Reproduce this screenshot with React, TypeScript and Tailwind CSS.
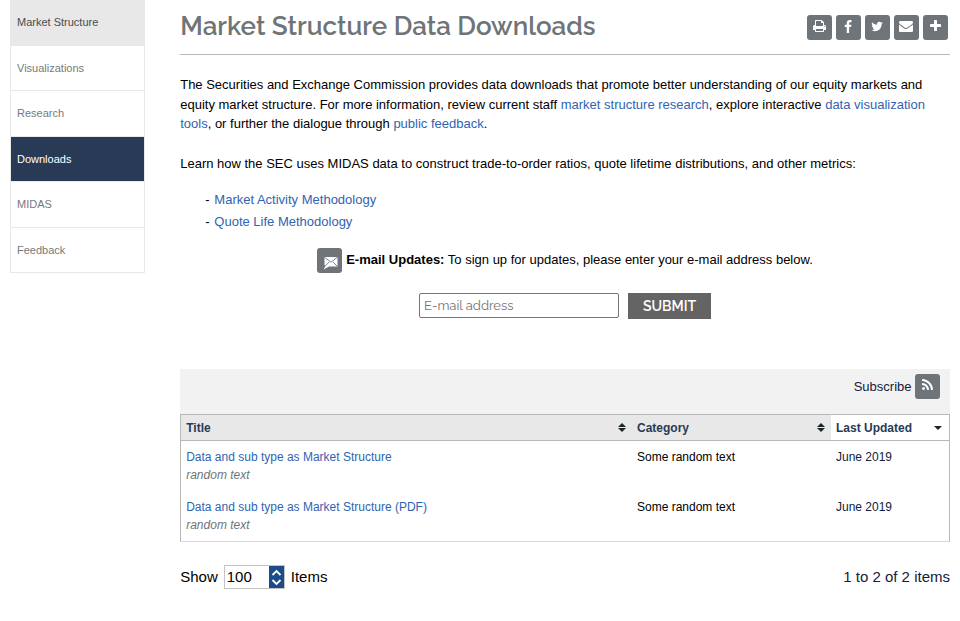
import React from "react";

const heading = "font-['Raleway','Lato',sans-serif]";

const navItems = [
  { label: "Market Structure", cls: "h-[46px] bg-[#e8e8e8] text-[#4a4c4f]" },
  { label: "Visualizations", cls: "h-[45px] border-b pt-[2px] text-[#77797c]" },
  { label: "Research", cls: "h-[46px] border-b text-[#77797c]" },
  { label: "Downloads", cls: "h-[45px] border-b bg-[#283a56] pt-[2px] text-white" },
  { label: "MIDAS", cls: "h-[46px] border-b text-[#77797c]" },
  { label: "Feedback", cls: "h-[45px] border-b pt-[2px] text-[#77797c]" },
];

const rows = [
  { title: "Data and sub type as Market Structure", category: "Some random text", date: "June 2019" },
  { title: "Data and sub type as Market Structure (PDF)", category: "Some random text", date: "June 2019" },
];

const icons = {
  print: {
    w: 1664,
    d: "M384 1536h896v-256h-896v256zM384 896h896v-384h-160q-40 0-68-28t-28-68v-160h-640v640zM1536 960q0-26-19-45t-45-19-45 19-19 45 19 45 45 19 45-19 19-45zM1664 960v416q0 13-9.5 22.5t-22.5 9.5h-224v160q0 40-28 68t-68 28h-960q-40 0-68-28t-28-68v-160h-224q-13 0-22.5-9.5t-9.5-22.5v-416q0-79 56.5-135.5t135.5-56.5h64v-544q0-40 28-68t68-28h672q40 0 88 20t76 48l152 152q28 28 48 76t20 88v256h64q79 0 135.5 56.5t56.5 135.5z",
  },
  facebook: {
    w: 1024,
    d: "M959 140v264h-157q-86 0-116 36t-30 108v189h293l-39 296h-254v759h-306v-759h-255v-296h255v-218q0-186 104-288.5t277-102.5q147 0 228 12z",
  },
  twitter: {
    w: 1664,
    d: "M1620 408q-67 98-162 167 1 14 1 42 0 130-38 259.5t-115.5 248.5-184.5 210.5-258 146-323 54.5q-271 0-496-145 35 4 78 4 225 0 401-138-105-2-188-64.5t-114-159.5q33 5 61 5 43 0 85-11-112-23-185.5-111.5t-73.5-205.5v-4q68 38 146 41-66-44-105-115t-39-154q0-88 44-163 121 149 294.5 238.5t371.5 99.5q-8-38-8-74 0-134 94.5-228.5t228.5-94.5q140 0 236 102 109-21 205-78-37 115-142 178 93-10 186-50z",
  },
  envelope: {
    w: 1792,
    d: "M1792 710v794q0 66-47 113t-113 47h-1472q-66 0-113-47t-47-113v-794q44 49 101 87 362 246 497 345 57 42 92.5 65.5t94.5 48 110 24.5h2q51 0 110-24.5t94.5-48 92.5-65.5q170-123 498-345 57-39 100-87zM1792 416q0 79-49 151t-122 123q-376 261-468 325-10 7-42.5 31t-54 38.5-52 32.5-57.5 27-50 9h-2q-23 0-50-9t-57.5-27-52-32.5-54-38.5-42.5-31q-91-64-262-182.5t-205-142.5q-62-42-117-115.5t-55-136.5q0-78 41.5-130t118.5-52h1472q65 0 112.5 47t47.5 113z",
  },
  plus: {
    w: 1408,
    d: "M1408 736v192q0 40-28 68t-68 28h-416v416q0 40-28 68t-68 28h-192q-40 0-68-28t-28-68v-416h-416q-40 0-68-28t-28-68v-192q0-40 28-68t68-28h416v-416q0-40 28-68t68-28h192q40 0 68 28t28 68v416h416q40 0 68 28t28 68z",
  },
  rss: {
    w: 1408,
    d: "M384 1344q0 80-56 136t-136 56-136-56-56-136 56-136 136-56 136 56 56 136zM896 1467q2 28-17 48-18 21-47 21h-135q-25 0-43-16.5t-20-41.5q-22-229-184.5-391.5t-391.5-184.5q-25-2-41.5-20t-16.5-43v-135q0-29 21-47 17-17 43-17h5q160 13 306 80.5t259 181.5q114 113 181.5 259t80.5 306zM1408 1469q2 27-18 47-18 20-46 20h-143q-26 0-44.5-17.5t-19.5-42.5q-12-215-101-408.5t-231.5-336-336-231.5-408.5-102q-25-1-42.5-19.5t-17.5-43.5v-143q0-28 20-46 18-18 44-18h3q262 13 501.5 120t425.5 294q187 186 294 425.5t120 501.5z",
  },
};

function Tile({ children }: { children: React.ReactNode }) {
  return (
    <span className="flex h-[25px] w-[25px] shrink-0 items-center justify-center rounded-[3px] bg-[#6f7478] text-white">
      {children}
    </span>
  );
}

function IconTile({ name, size = 14 }: { name: keyof typeof icons; size?: number }) {
  const { w, d } = icons[name];
  return (
    <Tile>
      <svg className="mb-[3px]" width={(w / 1792) * size} height={size} viewBox={`0 0 ${w} 1792`} fill="currentColor">
        <path d={d} />
      </svg>
    </Tile>
  );
}

function SortIcon() {
  return (
    <svg width="8" height="9" viewBox="0 0 8 9" fill="#1c2529">
      <path d="M4 0 8 4H0zM0 5h8L4 9z" />
    </svg>
  );
}

function Link({ children }: { children: React.ReactNode }) {
  return <a className="text-[#3164b0]">{children}</a>;
}

export default function App() {
  return (
    <div className="flex h-[621px] w-[960px] overflow-hidden bg-white pl-[10px] font-['Liberation_Sans',Arial,sans-serif] text-[13px] leading-[19.5px] text-black">
      <nav className="w-[135px] shrink-0 text-[11px]">
        {navItems.map((n) => (
          <div key={n.label} className={`flex items-center border-x border-[#e8e8e8] px-[6px] ${n.cls}`}>
            {n.label}
          </div>
        ))}
      </nav>

      <main className="ml-[35.2px] w-[769.8px]">
        <header className="flex h-[55px] justify-between border-b border-[#b8b8b8]">
          <h1 className={`${heading} mt-[10px] whitespace-nowrap text-[26px] font-semibold leading-[32px] tracking-[-0.01px] text-[#6f7478]`}>
            Market Structure Data Downloads
          </h1>
          <div className="mr-[2px] mt-[15px] flex gap-[4px]">
            <IconTile name="print" />
            <IconTile name="facebook" />
            <IconTile name="twitter" size={13} />
            <IconTile name="envelope" />
            <IconTile name="plus" />
          </div>
        </header>

        <p className="mt-[20px]">
          The Securities and Exchange Commission provides data downloads that promote better understanding of our equity markets and
          equity market structure. For more information, review current staff <Link>market structure research</Link>, explore
          interactive <Link>data visualization tools</Link>, or further the dialogue through <Link>public feedback</Link>.
        </p>
        <p className="mt-[20px]">
          Learn how the SEC uses MIDAS data to construct trade-to-order ratios, quote lifetime distributions, and other metrics:
        </p>
        <ul className="mt-[16px] pl-[25px] leading-[22px]">
          {["Market Activity Methodology", "Quote Life Methodology"].map((t) => (
            <li key={t} className="flex gap-[4.8px]"><span>-</span><Link>{t}</Link></li>
          ))}
        </ul>

        <div className="mt-[15px] flex h-[25px] justify-center gap-[3.8px]">
          <Tile>
            <svg width="15" height="14" viewBox="0 0 15 14" className="ml-[2px] mt-[5px]">
              <path d="M1.500 1h13v9.500H6L.5 13.500 2.500 10l-1-1z" fill="white" />
              <path d="m1.500 1.200 6.500 5 6.500-5M2 10.200l4.200-4.200M14.200 10.200l-4.200-4.200" fill="none" stroke="#6f7478" strokeWidth="0.9" />
            </svg>
          </Tile>
          <span className="mt-[2px]"><b>E-mail Updates:</b> To sign up for updates, please enter your e-mail address below.</span>
        </div>

        <div className="mt-[20px] flex h-[26px] justify-center gap-[9px]">
          <input
            placeholder="E-mail address"
            className={`${heading} h-[25px] w-[200px] rounded-[2px] border border-[#767676] px-[4px] text-[13px] font-normal placeholder:text-[#757575]`}
          />
          <button className={`${heading} h-[26px] w-[83px] bg-[#646464] pt-[2px] text-[14px] font-semibold text-white`}>SUBMIT</button>
        </div>

        <div className="mt-[50px] flex h-[45px] items-start justify-end gap-[3.5px] bg-[#f2f2f2] pr-[10px] pt-[5px] text-[#14213b]">
          <span className="mt-[3px]">Subscribe</span>
          <IconTile name="rss" />
        </div>

        <section className="h-[128px] border border-[#b8b8b8] border-b-[#d8d8d8] text-[12px] leading-[18px]">
          <div className="grid h-[26px] grid-cols-[450.8px_199px_118px] border-b border-[#b8b8b8] bg-[#e8e8e8] font-bold text-[#283a56]">
            <div className="flex items-center justify-between pl-[5px] pr-[6px]">Title<SortIcon /></div>
            <div className="flex items-center justify-between pl-[5px] pr-[6px]">Category<SortIcon /></div>
            <div className="flex items-center justify-between bg-white pl-[5px] pr-[6.500px]">
              Last Updated
              <svg width="8" height="4" viewBox="0 0 8 4" fill="#1c2529"><path d="M0 0h8L4 4z" /></svg>
            </div>
          </div>
          {rows.map((r) => (
            <div key={r.title} className="grid h-[50px] grid-cols-[450.8px_199px_118px] pt-[7px]">
              <div className="pl-[5px]">
                <Link>{r.title}</Link>
                <div className="italic text-[#6f7478]">random text</div>
              </div>
              <div className="pl-[5px]">{r.category}</div>
              <div className="pl-[5px] text-[#14213b]">{r.date}</div>
            </div>
          ))}
        </section>

        <footer className="mt-[23px] flex h-[24px] items-center justify-between text-[15px]">
          <div className="flex items-center">
            Show
            <div className="ml-[6px] mr-[6px] flex h-[24px] w-[61px] items-center justify-between border border-[#c4c4c4] pl-[2px]">
              100
              <svg width="15" height="22" viewBox="0 0 15 22" className="bg-[#1c4b8c]">
                <path d="m3.500 9 4-4 4 4M3.500 14l4 4 4-4" fill="none" stroke="white" strokeWidth="1.8" />
              </svg>
            </div>
            Items
          </div>
          <span className="text-[#14213b]">1 to 2 of 2 items</span>
        </footer>
      </main>
    </div>
  );
}
